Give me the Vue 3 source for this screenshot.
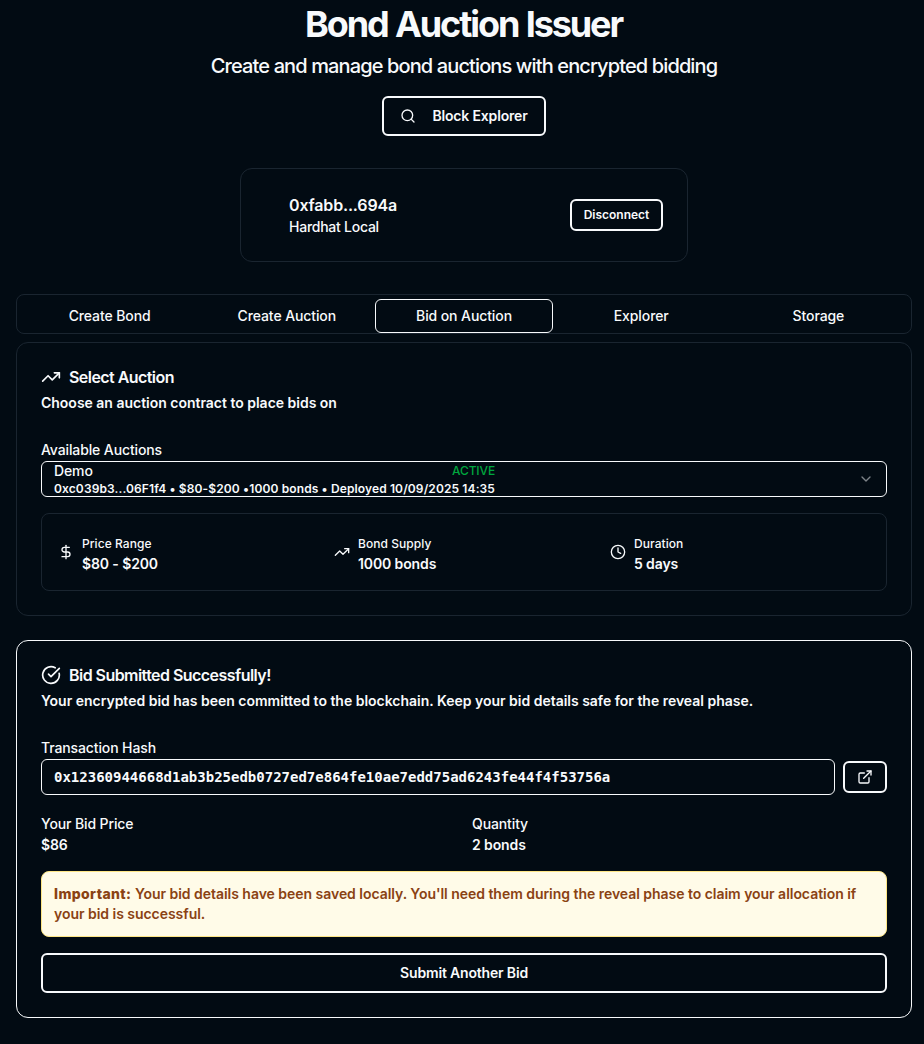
<script setup>
const tabs = ['Create Bond', 'Create Auction', 'Bid on Auction', 'Explorer', 'Storage']
const active = 'Bid on Auction'
</script>

<template>
  <main class="page">
    <header class="hero">
      <h1>Bond Auction Issuer</h1>
      <p class="lead">Create and manage bond auctions with encrypted bidding</p>
      <button class="btn explorer">
        <svg class="icon s16" viewBox="0 0 24 24"><circle cx="11" cy="11" r="8" /><path d="m21 21-4.3-4.3" /></svg>
        <span>Block Explorer</span>
      </button>
    </header>

    <section class="wallet">
      <div>
        <div class="address">0xfabb...694a</div>
        <div class="network">Hardhat Local</div>
      </div>
      <button class="btn small">Disconnect</button>
    </section>

    <nav class="tabs">
      <button v-for="tab in tabs" :key="tab" class="tab" :class="{ active: tab === active }">{{ tab }}</button>
    </nav>

    <section class="card select-card">
      <h2>
        <svg class="icon s20" viewBox="0 0 24 24"><path d="M22 7 13.5 15.5 8.5 10.5 2 17" /><path d="M16 7h6v6" /></svg>
        <span>Select Auction</span>
      </h2>
      <p class="desc">Choose an auction contract to place bids on</p>
      <label class="label">Available Auctions</label>
      <div class="select">
        <div class="option">
          <div class="option-top"><span>Demo</span><span class="status">ACTIVE</span></div>
          <div class="option-meta">0xc039b3...06F1f4 • $80-$200 •1000 bonds • Deployed 10/09/2025 14:35</div>
        </div>
        <svg class="icon s16 chevron" viewBox="0 0 24 24"><path d="m6 9 6 6 6-6" /></svg>
      </div>
      <div class="facts">
        <div class="fact">
          <svg class="icon s16" viewBox="0 0 24 24"><path d="M12 2v20" /><path d="M17 5H9.5a3.5 3.5 0 0 0 0 7h5a3.5 3.5 0 0 1 0 7H6" /></svg>
          <div><div class="fact-name">Price Range</div><div class="fact-value">$80 - $200</div></div>
        </div>
        <div class="fact">
          <svg class="icon s16" viewBox="0 0 24 24"><path d="M22 7 13.5 15.5 8.5 10.5 2 17" /><path d="M16 7h6v6" /></svg>
          <div><div class="fact-name">Bond Supply</div><div class="fact-value">1000 bonds</div></div>
        </div>
        <div class="fact">
          <svg class="icon s16" viewBox="0 0 24 24"><circle cx="12" cy="12" r="10" /><path d="M12 6v6l4 2" /></svg>
          <div><div class="fact-name">Duration</div><div class="fact-value">5 days</div></div>
        </div>
      </div>
    </section>

    <section class="card result-card">
      <h2>
        <svg class="icon s20" viewBox="0 0 24 24"><path d="M21.801 10A10 10 0 1 1 17 3.335" /><path d="m9 11 3 3L22 4" /></svg>
        <span>Bid Submitted Successfully!</span>
      </h2>
      <p class="desc">Your encrypted bid has been committed to the blockchain. Keep your bid details safe for the reveal phase.</p>
      <label class="label">Transaction Hash</label>
      <div class="hash-row">
        <div class="hash">0x12360944668d1ab3b25edb0727ed7e864fe10ae7edd75ad6243fe44f4f53756a</div>
        <button class="btn open" aria-label="Open transaction">
          <svg class="icon s16" viewBox="0 0 24 24"><path d="M15 3h6v6" /><path d="M10 14 21 3" /><path d="M18 13v6a2 2 0 0 1-2 2H5a2 2 0 0 1-2-2V8a2 2 0 0 1 2-2h6" /></svg>
        </button>
      </div>
      <div class="bid">
        <div><div>Your Bid Price</div><div class="bid-value">$86</div></div>
        <div><div>Quantity</div><div class="bid-value">2 bonds</div></div>
      </div>
      <div class="notice">
        <strong>Important:</strong> Your bid details have been saved locally. You'll need them during the reveal phase to claim your allocation if<br />your bid is successful.
      </div>
      <button class="btn again">Submit Another Bid</button>
    </section>
  </main>
</template>

<style>
body { background: #020b13; }
</style>

<style scoped>
* { box-sizing: border-box; }
.page {
  width: 896px;
  height: 1044px;
  margin-left: 16px;
  padding-top: 4px;
  overflow: hidden;
  color: #f8fafc;
  font: 500 14px/20px Inter, "Liberation Sans", sans-serif;
  letter-spacing: -0.12px;
}
h1, h2, p { margin: 0; }
.icon { flex: none; fill: none; stroke: currentColor; stroke-width: 2; stroke-linecap: round; stroke-linejoin: round; }
.s16 { width: 16px; height: 16px; }
.s20 { width: 20px; height: 20px; }
.hero { display: flex; flex-direction: column; align-items: center; }
h1 { margin-left: -1px; font-size: 36px; line-height: 40px; font-weight: 700; letter-spacing: -2.1px; word-spacing: 1px; }
.lead { margin-top: 8px; font-size: 20px; line-height: 28px; font-weight: 500; letter-spacing: -0.88px; white-space: nowrap; }
.btn {
  display: flex;
  align-items: center;
  justify-content: center;
  padding: 0;
  border: 2px solid #f8fafc;
  border-radius: 6px;
  background: transparent;
  color: inherit;
  font: inherit;
  font-weight: 600;
  letter-spacing: -0.17px;
}
.explorer { width: 164px; height: 40px; margin-top: 16px; gap: 16px; }
.wallet {
  display: flex;
  align-items: center;
  justify-content: space-between;
  width: 448px;
  height: 94px;
  margin: 32px auto 0;
  padding: 0 24px 0 48px;
  border: 1px solid #1a2530;
  border-radius: 12px;
}
.address { font-size: 16px; line-height: 24px; font-weight: 600; letter-spacing: -0.17px; }
.network { letter-spacing: -0.25px; }
.small { width: 93px; height: 32px; font-size: 12px; letter-spacing: 0; }
.tabs {
  display: grid;
  grid-template-columns: repeat(5, 1fr);
  height: 40px;
  margin-top: 32px;
  padding: 4px;
  border: 1px solid #1a2530;
  border-radius: 8px;
}
.tab { height: 34px; padding: 0; border: 1px solid transparent; border-radius: 6px; background: none; color: inherit; font: inherit; letter-spacing: -0.1px; }
.active { border-color: #f8fafc; }
.card { margin-top: 8px; padding: 24px; border: 1px solid #1a2530; border-radius: 12px; }
.result-card { margin-top: 24px; border-color: #f8fafc; }
h2 { display: flex; align-items: center; gap: 8px; font-size: 16px; line-height: 20px; font-weight: 600; letter-spacing: -0.55px; }
.desc { margin-top: 6px; font-weight: 600; letter-spacing: -0.015px; white-space: nowrap; }
.label { display: block; margin-top: 27px; height: 21px; }
.select {
  display: flex;
  align-items: center;
  justify-content: space-between;
  height: 36px;
  padding: 0 12px;
  border: 1px solid #f8fafc;
  border-radius: 6px;
}
.option-top { display: flex; justify-content: space-between; line-height: 20px; }
.status { color: #00a63e; font-size: 12px; }
.option-meta { font-size: 12px; line-height: 16px; font-weight: 600; letter-spacing: 0.12px; white-space: nowrap; }
.chevron { opacity: 0.5; }
.facts {
  display: grid;
  grid-template-columns: repeat(3, 1fr);
  gap: 16px;
  height: 78px;
  margin-top: 16px;
  padding: 16px;
  border: 1px solid #1a2530;
  border-radius: 8px;
}
.fact { display: flex; align-items: center; gap: 8px; }
.fact-name { padding-top: 4px; font-size: 12px; line-height: 20px; letter-spacing: 0.06px; }
.fact-value { font-weight: 600; }
.hash-row { display: flex; align-items: center; gap: 8px; }
.hash {
  flex: 1;
  height: 36px;
  padding: 0 12px;
  border: 1px solid #f8fafc;
  border-radius: 6px;
  font: 700 14px/34px "DejaVu Sans Mono", monospace;
  letter-spacing: 0;
}
.open { width: 44px; height: 32px; }
.bid { display: grid; grid-template-columns: 1fr 1fr; gap: 16px; margin-top: 18px; line-height: 21px; }
.bid-value { font-weight: 600; letter-spacing: -0.1px; }
.notice {
  height: 66px;
  margin-top: 16px;
  padding: 12px;
  border: 1px solid #fee685;
  border-radius: 8px;
  background: #fffbe8;
  color: #8a4213;
  font-weight: 600;
  letter-spacing: -0.035px;
  white-space: nowrap;
}
.notice strong { font-weight: 800; letter-spacing: 0.38px; }
.again { width: 100%; height: 40px; margin-top: 16px; }
</style>
